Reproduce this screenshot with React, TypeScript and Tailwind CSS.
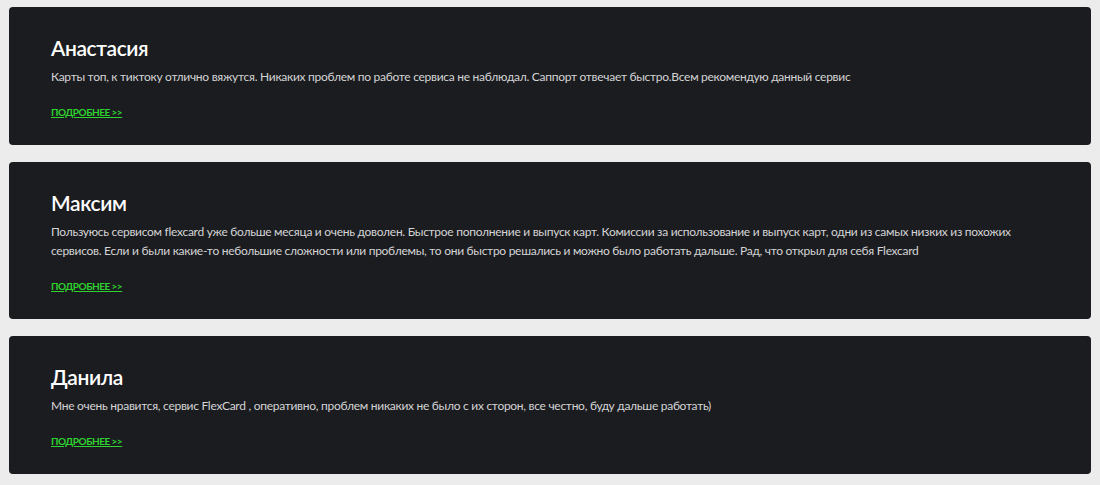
import React from 'react';

interface Review {
  name: string;
  text: string;
}

const reviews: Review[] = [
  {
    name: 'Анастасия',
    text: 'Карты топ, к тиктоку отлично вяжутся. Никаких проблем по работе сервиса не наблюдал. Саппорт отвечает быстро.Всем рекомендую данный сервис',
  },
  {
    name: 'Максим',
    text: 'Пользуюсь сервисом flexcard уже больше месяца и очень доволен. Быстрое пополнение и выпуск карт. Комиссии за использование и выпуск карт, одни из самых низких из похожих сервисов. Если и были какие-то небольшие сложности или проблемы, то они быстро решались и можно было работать дальше. Рад, что открыл для себя Flexcard',
  },
  {
    name: 'Данила',
    text: 'Мне очень нравится, сервис FlexCard , оперативно, проблем никаких не было с их сторон, все честно, буду дальше работать)',
  },
];

const ReviewCard: React.FC<{ review: Review }> = ({ review }) => (
  <div className="bg-[#1b1c1f] rounded-[4px] px-[42px] pt-[27px] pb-[26px]">
    <h3 className="text-[21px] leading-[28px] font-semibold tracking-[-0.4px] text-white">{review.name}</h3>
    <p className="mt-[5px] text-[12px] leading-[19px] tracking-[-0.28px] text-[#d4d4d6]">{review.text}</p>
    <a href="#" className="block w-fit mt-[19px] text-[10px] leading-[14px] font-bold tracking-[-0.5px] text-[#2fd22f] underline">
      ПОДРОБНЕЕ &gt;&gt;
    </a>
  </div>
);

export default function App() {
  return (
    <div className="min-h-[485px] bg-[#ececec] px-[9px] pt-[7px] flex flex-col gap-[17px] font-['Lato',sans-serif]">
      {reviews.map(r => (
        <ReviewCard key={r.name} review={r} />
      ))}
    </div>
  );
}
